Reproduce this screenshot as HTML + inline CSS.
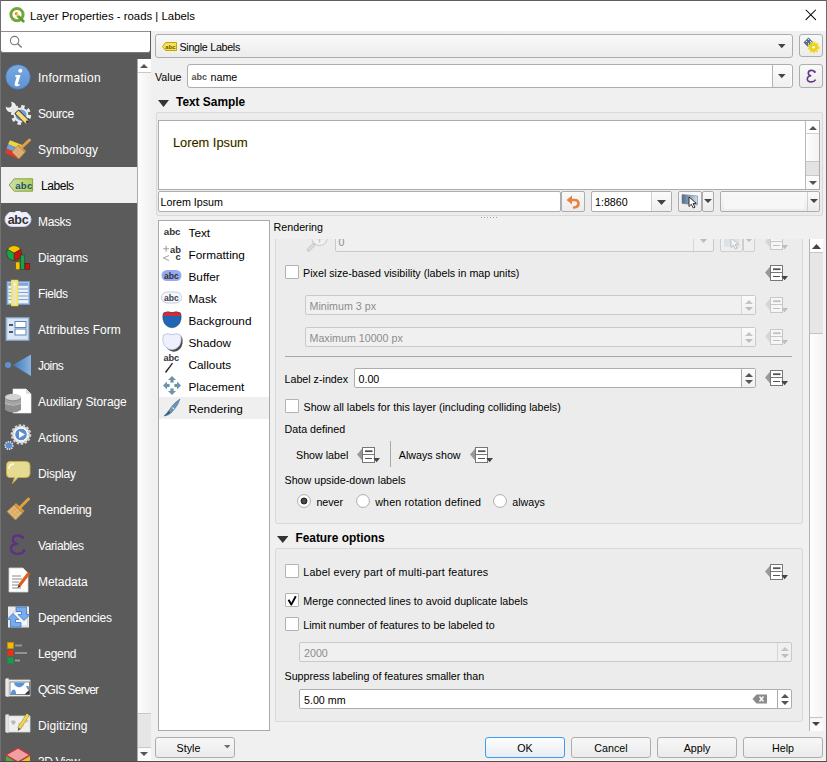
<!DOCTYPE html>
<html><head><meta charset="utf-8">
<style>
*{box-sizing:border-box;margin:0;padding:0}
html,body{width:827px;height:762px;overflow:hidden;background:#f0f0f0;font-family:"Liberation Sans",sans-serif;color:#000;position:relative}
.a{position:absolute}
.t{position:absolute;white-space:nowrap}
</style></head><body>
<div class="a" style="left:0px;top:0px;width:827px;height:762px;background:#f0f0f0"></div>
<div class="a" style="left:0px;top:1px;width:827px;height:30px;background:#fff"></div>
<div class="a" style="left:0px;top:0px;width:827px;height:1px;background:#5e5e5e"></div>
<div class="a" style="left:0px;top:0px;width:1px;height:762px;background:#707070"></div>
<div class="a" style="left:826px;top:0px;width:1px;height:762px;background:#6e6e6e"></div>
<svg class="a" style="left:8px;top:6px" width="19" height="19" viewBox="0 0 19 19"><circle cx="9" cy="8.6" r="6.1" fill="none" stroke="#73a93a" stroke-width="3"/><line x1="10" y1="10" x2="15.3" y2="15.3" stroke="#5e9e2e" stroke-width="2.8" stroke-linecap="round"/><circle cx="8.3" cy="7.7" r="1.6" fill="#f1891f"/><line x1="8.6" y1="8" x2="10.5" y2="10" stroke="#e7d36a" stroke-width="1.6"/></svg>
<div class="t" style="left:30px;top:9.00px;font-size:11.4px;line-height:14px;font-weight:400;color:#000;">Layer Properties - roads | Labels</div>
<svg class="a" style="left:805px;top:9px" width="12" height="12" viewBox="0 0 12 12"><path d="M1 1L10.6 10.6M10.6 1L1 10.6" stroke="#000" stroke-width="1.05" stroke-linecap="round"/></svg>
<div class="a" style="left:1px;top:31px;width:150px;height:28px;background:#5b5b5b"></div>
<div class="a" style="left:1px;top:31px;width:149px;height:1px;background:#8e8e8e"></div>
<div class="a" style="left:1px;top:32px;width:149px;height:20px;background:#fff;border-radius:0 0 2px 2px"></div>
<div class="a" style="left:1px;top:52px;width:149px;height:1px;background:#7a7a7a"></div>
<svg class="a" style="left:9px;top:35px" width="14" height="14" viewBox="0 0 14 14"><circle cx="5.6" cy="5.6" r="4.2" fill="none" stroke="#777" stroke-width="1.1"/><line x1="8.6" y1="8.6" x2="12.6" y2="12.6" stroke="#777" stroke-width="1.4"/></svg>
<div class="a" style="left:1px;top:53px;width:149px;height:709px;background:#5b5b5b"></div>
<div class="a" style="left:137px;top:59px;width:14px;height:703px;background:linear-gradient(90deg,#fdfdfd,#f1f1f1);border-left:1px solid #ababab"></div>
<div class="a" style="left:138px;top:59px;width:13px;height:14px;background:#fff;border-bottom:1px solid #c8c8c8"></div>
<svg class="a" style="left:140px;top:63.5px" width="8" height="4" viewBox="0 0 8 4"><polygon points="0,4 8,4 4.0,0" fill="#555"/></svg>
<div class="a" style="left:138px;top:713px;width:13px;height:35px;background:#e6e6e6;border-top:1px solid #c8c8c8;border-bottom:1px solid #c8c8c8"></div>
<div class="a" style="left:138px;top:748px;width:13px;height:13px;background:#fbfbfb"></div>
<svg class="a" style="left:140px;top:752px" width="8" height="4" viewBox="0 0 8 4"><polygon points="0,0 8,0 4.0,4" fill="#555"/></svg>
<div class="a" style="left:1px;top:167px;width:136px;height:36px;background:#f0f0f0"></div>
<div class="t" style="left:38px;top:70.50px;font-size:12px;line-height:15px;font-weight:400;color:#fff;letter-spacing:0.257px">Information</div>
<div class="t" style="left:38px;top:106.50px;font-size:12px;line-height:15px;font-weight:400;color:#fff;letter-spacing:-0.386px">Source</div>
<div class="t" style="left:38px;top:142.50px;font-size:12px;line-height:15px;font-weight:400;color:#fff;letter-spacing:0.078px">Symbology</div>
<div class="t" style="left:41px;top:178.50px;font-size:12px;line-height:15px;font-weight:400;color:#000;letter-spacing:-0.455px">Labels</div>
<div class="t" style="left:38px;top:214.50px;font-size:12px;line-height:15px;font-weight:400;color:#fff;letter-spacing:-0.368px">Masks</div>
<div class="t" style="left:38px;top:250.50px;font-size:12px;line-height:15px;font-weight:400;color:#fff;letter-spacing:-0.18px">Diagrams</div>
<div class="t" style="left:38px;top:286.50px;font-size:12px;line-height:15px;font-weight:400;color:#fff;letter-spacing:-0.423px">Fields</div>
<div class="t" style="left:38px;top:322.50px;font-size:12px;line-height:15px;font-weight:400;color:#fff;letter-spacing:0.055px">Attributes Form</div>
<div class="t" style="left:38px;top:358.50px;font-size:12px;line-height:15px;font-weight:400;color:#fff;letter-spacing:-0.554px">Joins</div>
<div class="t" style="left:38px;top:394.50px;font-size:12px;line-height:15px;font-weight:400;color:#fff;letter-spacing:-0.126px">Auxiliary Storage</div>
<div class="t" style="left:38px;top:430.50px;font-size:12px;line-height:15px;font-weight:400;color:#fff;letter-spacing:0.073px">Actions</div>
<div class="t" style="left:38px;top:466.50px;font-size:12px;line-height:15px;font-weight:400;color:#fff;letter-spacing:-0.227px">Display</div>
<div class="t" style="left:38px;top:502.50px;font-size:12px;line-height:15px;font-weight:400;color:#fff;letter-spacing:-0.197px">Rendering</div>
<div class="t" style="left:38px;top:538.50px;font-size:12px;line-height:15px;font-weight:400;color:#fff;letter-spacing:-0.393px">Variables</div>
<div class="t" style="left:38px;top:574.50px;font-size:12px;line-height:15px;font-weight:400;color:#fff;letter-spacing:-0.05px">Metadata</div>
<div class="t" style="left:38px;top:610.50px;font-size:12px;line-height:15px;font-weight:400;color:#fff;letter-spacing:-0.258px">Dependencies</div>
<div class="t" style="left:38px;top:646.50px;font-size:12px;line-height:15px;font-weight:400;color:#fff;letter-spacing:-0.329px">Legend</div>
<div class="t" style="left:38px;top:682.50px;font-size:12px;line-height:15px;font-weight:400;color:#fff;letter-spacing:-0.759px">QGIS Server</div>
<div class="t" style="left:38px;top:718.50px;font-size:12px;line-height:15px;font-weight:400;color:#fff;letter-spacing:0.079px">Digitizing</div>
<div class="t" style="left:38px;top:754.50px;font-size:12px;line-height:15px;font-weight:400;color:#fff;letter-spacing:-0.411px">3D View</div>
<svg class="a" style="left:5px;top:64px" width="26" height="26" viewBox="0 0 26 26"><defs><linearGradient id="gi" x1="0" y1="0" x2="0" y2="1"><stop offset="0" stop-color="#79a9e2"/><stop offset="1" stop-color="#5e92d2"/></linearGradient></defs><circle cx="13" cy="13" r="12.3" fill="url(#gi)" stroke="#3f6fae" stroke-width="0.6"/><circle cx="15.3" cy="6.8" r="2" fill="#fff"/><path d="M10.5 11H15.5L13 19.5Q12.6 21 14.5 20L15 21Q12.5 23 10.3 22Q9 21.4 9.7 19.6L11.6 13H10.2Z" fill="#fff"/></svg>
<svg class="a" style="left:2px;top:96px" width="32" height="32" viewBox="0 0 32 32"><circle cx="19" cy="19" r="8.6" fill="none" stroke="#ececec" stroke-width="3" stroke-dasharray="3.4 3.35"/><circle cx="19" cy="19" r="7.4" fill="#ececec"/><circle cx="19" cy="19" r="5.6" fill="#6e9fd8"/><circle cx="9" cy="11" r="5.2" fill="#eeeeee"/><circle cx="6.6" cy="8.4" r="3.1" fill="#5b5b5b"/><line x1="10" y1="12" x2="15" y2="17" stroke="#e6e6e6" stroke-width="4"/><line x1="14.5" y1="15.5" x2="25.5" y2="26.5" stroke="#262626" stroke-width="6"/><line x1="15" y1="16" x2="25.3" y2="26.3" stroke="#f3dc78" stroke-width="4.3"/><circle cx="25.2" cy="25.8" r="1.3" fill="#333"/></svg>
<svg class="a" style="left:2px;top:132px" width="32" height="32" viewBox="0 0 32 32"><polygon points="8,8.3 21.5,13.5 19.5,17.5 6,12.3" fill="#ecd63a"/><polygon points="6,12.3 19.5,17.5 13,20 4.5,16.8" fill="#6e9fd6"/><polygon points="4.5,16.8 13,20 16.5,27 3,21" fill="#e23a2a"/><polygon points="10,20 15.5,13.8 23,20.3 16.8,27" fill="#ddb27a" stroke="#b88236" stroke-width="0.7"/><polygon points="15.5,13.8 17,12.3 24,19 23,20.3" fill="#d4963e"/><g stroke="#caa06a" stroke-width="0.45"><line x1="12" y1="17.7" x2="19" y2="24.5"/><line x1="13.8" y1="15.8" x2="21" y2="22.5"/><line x1="12.3" y1="22.8" x2="18.5" y2="16"/><line x1="14.5" y1="25" x2="20.7" y2="18.2"/></g><line x1="19.5" y1="15.5" x2="27.5" y2="8" stroke="#dfa046" stroke-width="3" stroke-linecap="round"/></svg>
<svg class="a" style="left:8px;top:177px" width="26" height="16" viewBox="0 0 26 16"><defs><linearGradient id="gl" x1="0" x2="1"><stop offset="0" stop-color="#c8e2a8"/><stop offset="1" stop-color="#b2cf5a"/></linearGradient></defs><path d="M1.2 8L6.2 1.8H24.6V14.2H6.2Z" fill="url(#gl)" stroke="#8ca23c" stroke-width="1"/><text x="16" y="11.6" font-size="9.6" font-weight="bold" font-family="Liberation Sans" fill="#234f70" text-anchor="middle" letter-spacing="0.4">abc</text></svg>
<svg class="a" style="left:4px;top:211px" width="28" height="17" viewBox="0 0 28 17"><rect x="1" y="1.5" width="26" height="14" rx="7" fill="#eef0fb" stroke="#c9cde4" stroke-width="1"/><circle cx="7" cy="4.5" r="3.5" fill="#eef0fb"/><circle cx="14" cy="3" r="3.5" fill="#eef0fb"/><circle cx="21" cy="4.5" r="3.5" fill="#eef0fb"/><text x="14" y="13" font-size="12.5" font-weight="bold" font-family="Liberation Sans" fill="#333" text-anchor="middle" letter-spacing="-0.3">abc</text></svg>
<svg class="a" style="left:5px;top:244px" width="26" height="28" viewBox="0 0 26 28"><path d="M9.1 9.1L2.6 5.35A7.5 7.5 0 0 1 15.6 5.35Z" fill="#f6c700"/><path d="M9.1 9.1L15.6 5.35A7.5 7.5 0 0 1 9.1 16.6Z" fill="#c8150f"/><path d="M9.1 9.1L9.1 16.6A7.5 7.5 0 0 1 2.6 5.35Z" fill="#17a34a"/><circle cx="9.1" cy="9.1" r="7.5" fill="none" stroke="#3a2a1a" stroke-width="0.6"/><path d="M2.6 5.35L9.1 9.1L15.6 5.35M9.1 9.1V16.6" stroke="#3a2a1a" stroke-width="0.6" fill="none"/><rect x="10.8" y="18" width="4.1" height="7.6" fill="#f6c700" stroke="#6a4a00" stroke-width="0.5"/><rect x="15.6" y="11" width="4.1" height="14.6" fill="#17a34a" stroke="#1a3a1a" stroke-width="0.5"/><rect x="20.1" y="19.4" width="4.4" height="6.2" fill="#c8150f" stroke="#4a0a0a" stroke-width="0.5"/></svg>
<svg class="a" style="left:5px;top:279px" width="26" height="28" viewBox="0 0 26 28"><rect x="2" y="2.5" width="22.5" height="23" fill="#a9c4e4" stroke="#6f98c6" stroke-width="1"/><rect x="3.5" y="7" width="19.5" height="17" fill="#eef2f8"/><rect x="3.5" y="4" width="19.5" height="2.5" fill="#7ea6d6"/><g stroke="#7ea6d6" stroke-width="1.1"><line x1="3.5" y1="10" x2="23" y2="10"/><line x1="3.5" y1="13.5" x2="23" y2="13.5"/><line x1="3.5" y1="17" x2="23" y2="17"/><line x1="3.5" y1="20.5" x2="23" y2="20.5"/></g><rect x="6.8" y="1.5" width="5.8" height="25" fill="#ece4bc" stroke="#f5e542" stroke-width="1.4"/><circle cx="9.7" cy="5.5" r="0.9" fill="#fff"/></svg>
<svg class="a" style="left:5px;top:316px" width="26" height="26" viewBox="0 0 26 26"><rect x="1" y="1.5" width="23" height="23" fill="#b9cde4" stroke="#7c9fc9" stroke-width="1"/><rect x="2.5" y="3" width="20" height="20" fill="#dbe6f2"/><rect x="4" y="8" width="4" height="2" fill="#3d5a78"/><rect x="4" y="15" width="4" height="2" fill="#3d5a78"/><rect x="10" y="5.5" width="11" height="6" fill="#fff" stroke="#5f85b3"/><rect x="10" y="13" width="11" height="6" fill="#fff" stroke="#5f85b3"/></svg>
<svg class="a" style="left:4px;top:353px" width="28" height="24" viewBox="0 0 28 24"><defs><linearGradient id="gj" x1="0" x2="1"><stop offset="0" stop-color="#3b78b9"/><stop offset="1" stop-color="#8ab3e0"/></linearGradient></defs><circle cx="4" cy="12" r="3" fill="#5d92cf"/><polygon points="8.8,12 27,1.5 27,23" fill="url(#gj)"/></svg>
<svg class="a" style="left:4px;top:388px" width="28" height="26" viewBox="0 0 28 26"><path d="M9 1H22L27 6V25H9Z" fill="#fff" stroke="#eee" stroke-width="0.6"/><path d="M22 1V6H27" fill="#ddd"/><path d="M1 9V22Q9 27 17 22V9Z" fill="#8e8e8e"/><ellipse cx="9" cy="9" rx="8" ry="3.2" fill="#d2d2d2"/><path d="M1 15Q9 19 17 15" fill="none" stroke="#d6d6d6" stroke-width="1.2"/><path d="M1 11Q9 16 17 11V15Q9 19 1 15Z" fill="#a4a4a4"/></svg>
<svg class="a" style="left:4px;top:422px" width="28" height="28" viewBox="0 0 28 28"><circle cx="17" cy="12.5" r="8.8" fill="#f0f0f0" stroke="#d0d0d0" stroke-width="3" stroke-dasharray="2.3 1.6"/><circle cx="17" cy="12.5" r="6.3" fill="#5b8dcb" stroke="#fff" stroke-width="1"/><polygon points="15,9 21,12.5 15,16" fill="#fff"/><circle cx="5" cy="23.5" r="3.8" fill="#5b8dcb" stroke="#e6e6e6" stroke-width="1.6" stroke-dasharray="1.3 1"/></svg>
<svg class="a" style="left:5px;top:460px" width="26" height="25" viewBox="0 0 26 25"><path d="M4.5 1.5H21Q25 1.5 25 5.5V13.5Q25 17.5 21 17.5H13L7.5 23.5L9.5 17.5H4.5Q1.5 17.5 1.5 13.5V5.5Q1.5 1.5 4.5 1.5Z" fill="#e6db92" stroke="#c4ad4a" stroke-width="1"/><path d="M4 9Q4 4 9 4" stroke="#fffbe8" stroke-width="1.4" fill="none"/></svg>
<svg class="a" style="left:5px;top:496px" width="26" height="26" viewBox="0 0 26 26"><polygon points="2,15.5 9,9 17.5,17 10.5,24" fill="#e2b878" stroke="#b88236" stroke-width="0.8"/><polygon points="9,9 11,7 19.5,15 17.5,17" fill="#d4963e"/><g stroke="#c9974d" stroke-width="0.5"><line x1="4.5" y1="13" x2="13" y2="21.3"/><line x1="7" y1="10.8" x2="15.3" y2="19"/><line x1="5" y1="18" x2="12" y2="11.5"/><line x1="8" y1="21" x2="14.5" y2="14.5"/></g><line x1="14.5" y1="12" x2="23.5" y2="3" stroke="#e0a23c" stroke-width="3" stroke-linecap="round"/></svg>
<svg class="a" style="left:8px;top:533px" width="20" height="24" viewBox="0 0 20 24"><path d="M14.5 4.5Q13 2.5 9.5 2.5Q4.8 2.5 4.8 6.5Q4.8 10 9 10.8Q3 11.3 3 15.5Q3 20.8 9.8 20.8Q14.5 20.8 16 17.5" fill="none" stroke="#5f2f88" stroke-width="2.3" stroke-linecap="round"/><circle cx="14.6" cy="4.2" r="1.5" fill="#5f2f88"/><circle cx="16" cy="17.3" r="1.3" fill="#5f2f88"/><path d="M8 10.8H10.5" stroke="#5f2f88" stroke-width="1.2"/></svg>
<svg class="a" style="left:5px;top:566px" width="26" height="28" viewBox="0 0 26 28"><path d="M4 2H18L23 7V26H4Z" fill="#fff" stroke="#d0d0d0" stroke-width="0.8"/><g stroke="#8a8a8a" stroke-width="1"><line x1="7" y1="10" x2="16" y2="10"/><line x1="7" y1="13" x2="17" y2="13"/><line x1="7" y1="16" x2="14" y2="16"/><line x1="7" y1="19" x2="13" y2="19"/><line x1="7" y1="22" x2="16" y2="22"/></g><line x1="14" y1="20" x2="24" y2="7" stroke="#e0601a" stroke-width="3.2"/><polygon points="12.5,22 13.5,19 15.5,20.5" fill="#333"/></svg>
<svg class="a" style="left:4px;top:604px" width="28" height="26" viewBox="0 0 28 26"><rect x="4" y="2.5" width="21" height="21" fill="#ebebeb"/><rect x="9.5" y="8" width="14" height="14" fill="#f6f6f6" stroke="#cfcfcf" stroke-width="0.8"/><path d="M12 3H22.5V10.5H26L20 16.5L14 10.5H17.5V7.5H12Z" fill="#78acec" stroke="#3f77c2" stroke-width="0.8" stroke-linejoin="round"/><path d="M17 23H6.5V15.5H3L9 9.5L15 15.5H11.5V18.5H17Z" fill="#78acec" stroke="#3f77c2" stroke-width="0.8" stroke-linejoin="round"/></svg>
<svg class="a" style="left:5px;top:640px" width="26" height="26" viewBox="0 0 26 26"><rect x="2.5" y="2.5" width="6" height="6" fill="#f6b800" stroke="#d28f00" stroke-width="0.5"/><rect x="2.5" y="10" width="6" height="6" fill="#e4331b"/><rect x="2.5" y="17.5" width="6" height="6" fill="#129e45"/><g stroke="#9a9a9a" stroke-width="1.8"><line x1="10" y1="5.5" x2="17" y2="5.5"/><line x1="10" y1="13" x2="22" y2="13"/><line x1="10" y1="20.5" x2="15" y2="20.5"/></g></svg>
<svg class="a" style="left:4px;top:677px" width="28" height="22" viewBox="0 0 28 22"><path d="M3 3H26V19H3Z" fill="#f2f2f2" stroke="#d8d8d8" stroke-width="0.8"/><path d="M1.5 2.5Q1.5 1.5 3 1.5H4.5V19.5H3Q1.5 19.5 1.5 18.5Z" fill="#e8e8e8" stroke="#cfcfcf" stroke-width="0.6"/><rect x="6" y="5" width="19.5" height="12.5" fill="#fff" stroke="#6a6a6a" stroke-width="0.8"/><path d="M10 5.5H21Q20 9 17 10Q14 11 12 9Q10 8 10 5.5Z" fill="#5b95d6"/><path d="M6.5 17Q7.5 12.5 10 12.5Q12 13 12 17Z" fill="#5b95d6"/><path d="M22 9Q25 8 25 11V13Q23 12 22 9Z" fill="#5b95d6"/><polygon points="20.5,17.5 25.5,12.5 25.5,17.5" fill="#3a3a3a"/></svg>
<svg class="a" style="left:4px;top:712px" width="28" height="22" viewBox="0 0 28 22"><path d="M3 4H26V20H3Z" fill="#efefef" stroke="#d6d6d6" stroke-width="0.8"/><path d="M1.5 3.5Q1.5 2.5 3 2.5H4.5V20.5H3Q1.5 20.5 1.5 19.5Z" fill="#e4e4e4" stroke="#cfcfcf" stroke-width="0.6"/><path d="M7 9Q10 7 12 10Q10 14 8 12Z" fill="#b9b9b9"/><path d="M14 12Q17 9 20 13L17 17Z" fill="#c4c4c4"/><path d="M20 8Q23 7 25 9L22 11Z" fill="#c9c9c9"/><line x1="15" y1="16.5" x2="24" y2="2.5" stroke="#b59a1a" stroke-width="3.6"/><line x1="15" y1="16.5" x2="24" y2="2.5" stroke="#efd653" stroke-width="2.4"/><polygon points="13.8,19 14.3,15.6 16.6,17" fill="#555"/></svg>
<svg class="a" style="left:4px;top:747px" width="28" height="15" viewBox="0 0 28 15"><polygon points="14,1 26,8 14,15 2,8" fill="#f0a0a0" stroke="#c8303a" stroke-width="1.2"/><polygon points="2,9 14,16 2,16" fill="#4caf3a"/><polygon points="26,9 14,16 26,16" fill="#e8c42a"/></svg>
<div class="a" style="left:155px;top:34px;width:638px;height:24px;border:1px solid #adadad;border-radius:3px;background:linear-gradient(#f9f9f9,#ececec)"></div>
<svg class="a" style="left:162px;top:42px" width="15" height="9" viewBox="0 0 15 9"><path d="M0.5 4.5L3.5 0.5H14.5V8.5H3.5Z" fill="#f5e15a" stroke="#c9a400"/><text x="8.5" y="7" font-size="6" font-family="Liberation Sans" font-weight="bold" fill="#6b5a00" text-anchor="middle">abc</text></svg>
<div class="t" style="left:179.5px;top:40.50px;font-size:10.7px;line-height:13px;font-weight:400;color:#000;letter-spacing:-0.28px">Single Labels</div>
<svg class="a" style="left:778px;top:44px" width="7.6" height="4.2" viewBox="0 0 7.6 4.2"><polygon points="0,0 7.6,0 3.8,4.2" fill="#444"/></svg>
<div class="a" style="left:799px;top:34px;width:24px;height:23px;border:1px solid #adadad;border-radius:3px;background:linear-gradient(#f9f9f9,#ececec)"></div>
<svg class="a" style="left:802px;top:36px" width="20" height="20" viewBox="0 0 20 20"><polygon points="1.5,6.5 6.5,1.5 11,6 6,11" fill="#4f6f8f"/><g fill="#fff"><circle cx="4.5" cy="5.5" r="0.6"/><circle cx="6.5" cy="3.5" r="0.6"/><circle cx="6.5" cy="7.5" r="0.6"/><circle cx="8.5" cy="5.5" r="0.6"/></g><circle cx="11.6" cy="11.3" r="4.6" fill="#f2dc2a" stroke="#f2dc2a" stroke-width="2.6" stroke-dasharray="1.7 1.3"/><circle cx="11.6" cy="11.3" r="4.2" fill="#efd21f"/><circle cx="11.6" cy="11.3" r="1.2" fill="#fff"/></svg>
<div class="t" style="left:155px;top:70.50px;font-size:10.7px;line-height:13px;font-weight:400;color:#000;">Value</div>
<div class="a" style="left:187px;top:64px;width:606px;height:24px;border:1px solid #adadad;border-radius:3px;background:#fff"></div>
<div class="a" style="left:773px;top:65px;width:18px;height:22px;background:linear-gradient(#fdfdfd,#efefef);border-radius:0 2px 2px 0"></div>
<div class="a" style="left:772px;top:65px;width:1px;height:22px;background:#b4b4b4"></div>
<svg class="a" style="left:778px;top:74px" width="7.6" height="4.2" viewBox="0 0 7.6 4.2"><polygon points="0,0 7.6,0 3.8,4.2" fill="#444"/></svg>
<div class="t" style="left:191.5px;top:71.50px;font-size:9px;line-height:11px;font-weight:700;color:#555;">abc</div>
<div class="t" style="left:210.5px;top:70.50px;font-size:10.7px;line-height:13px;font-weight:400;color:#000;">name</div>
<div class="a" style="left:799px;top:64px;width:24px;height:24px;border:1px solid #adadad;border-radius:3px;background:linear-gradient(#f9f9f9,#ececec)"></div>
<svg class="a" style="left:804px;top:68px" width="14" height="16" viewBox="0 0 14 16"><path d="M11 4Q10 2.4 7.3 2.4Q4.3 2.4 4.3 5.2Q4.3 7.4 7.2 7.8Q3.3 8.2 3.3 11Q3.3 13.9 7.3 13.9Q10.3 13.9 11.6 11.6" fill="none" stroke="#5e3a8a" stroke-width="1.6"/><circle cx="10.8" cy="4" r="1.1" fill="#5e3a8a"/></svg>
<svg class="a" style="left:157.5px;top:100px" width="11" height="7" viewBox="0 0 11 7"><polygon points="0,0 11,0 5.5,7" fill="#333"/></svg>
<div class="t" style="left:176px;top:94.50px;font-size:11.9px;line-height:15px;font-weight:700;color:#000;">Text Sample</div>
<div class="a" style="left:156px;top:112px;width:667px;height:104px;border:1px solid #d9d9d9;border-radius:2px;background:#ececec"></div>
<div class="a" style="left:158px;top:120px;width:662px;height:70px;background:#fff;border:1px solid #ababab"></div>
<div class="t" style="left:173px;top:134.50px;font-size:12.8px;line-height:16px;font-weight:400;color:#1a1a1a;text-shadow:0 0 1px #fff3b8,0 0 2px #fff3b8,0 0 2px #fff6cc">Lorem Ipsum</div>
<div class="a" style="left:805px;top:121px;width:14px;height:68px;background:linear-gradient(90deg,#fdfdfd,#f3f3f3);border-left:1px solid #b9b9b9"></div>
<div class="a" style="left:806px;top:121px;width:13px;height:13px;background:#fff;border-bottom:1px solid #cfcfcf"></div>
<svg class="a" style="left:808.5px;top:125.5px" width="8" height="4" viewBox="0 0 8 4"><polygon points="0,4 8,4 4.0,0" fill="#555"/></svg>
<div class="a" style="left:806px;top:161px;width:13px;height:15px;background:#e3e3e3;border-top:1px solid #c8c8c8;border-bottom:1px solid #c8c8c8"></div>
<div class="a" style="left:806px;top:176px;width:13px;height:13px;background:#fbfbfb"></div>
<svg class="a" style="left:808.5px;top:180.5px" width="8" height="4" viewBox="0 0 8 4"><polygon points="0,0 8,0 4.0,4" fill="#555"/></svg>
<div class="a" style="left:158px;top:191px;width:403px;height:21px;border:1px solid #adadad;border-radius:2px;background:#fff"></div>
<div class="t" style="left:160.5px;top:195.50px;font-size:10.7px;line-height:13px;font-weight:400;color:#000;">Lorem Ipsum</div>
<div class="a" style="left:561px;top:191px;width:24px;height:21px;border:1px solid #adadad;border-radius:2px;background:linear-gradient(#f9f9f9,#ececec)"></div>
<svg class="a" style="left:564px;top:193px" width="18" height="17" viewBox="0 0 18 17"><path d="M7 7H10.5Q14.5 7 14.5 10.5Q14.5 14 10 14.5" fill="none" stroke="#e8823e" stroke-width="2.6" stroke-linecap="round"/><polygon points="2.5,7 8,2.5 8,11.5" fill="#e8823e"/></svg>
<div class="a" style="left:591px;top:191px;width:81px;height:21px;border:1px solid #adadad;border-radius:2px;background:#fff"></div>
<div class="a" style="left:651px;top:192px;width:1px;height:19px;background:#d0d0d0"></div>
<div class="a" style="left:652px;top:192px;width:19px;height:19px;background:linear-gradient(#fbfbfb,#efefef)"></div>
<div class="t" style="left:595px;top:195.50px;font-size:10.7px;line-height:13px;font-weight:400;color:#000;">1:8860</div>
<svg class="a" style="left:657px;top:199.5px" width="9" height="5" viewBox="0 0 9 5"><polygon points="0,0 9,0 4.5,5" fill="#444"/></svg>
<div class="a" style="left:678px;top:191px;width:24px;height:21px;border:1px solid #adadad;border-radius:2px;background:linear-gradient(#f9f9f9,#ececec)"></div>
<svg class="a" style="left:681px;top:193px" width="19" height="16" viewBox="0 0 19 16"><defs><linearGradient id="gc" x1="0" x2="1"><stop offset="0" stop-color="#4f6d8c"/><stop offset="1" stop-color="#d7e0ea"/></linearGradient></defs><polygon points="1,1.5 16.5,3 16.5,12 1,10.5" fill="url(#gc)" stroke="#6b8099" stroke-width="0.6"/><path d="M8 4L8 13.5L10.3 11.3L12.3 15L14 14.2L12.1 10.6L15.3 10.3Z" fill="#fff" stroke="#1a1a1a" stroke-width="0.9" stroke-linejoin="round"/></svg>
<div class="a" style="left:702px;top:191px;width:12px;height:21px;border:1px solid #adadad;border-radius:2px;background:linear-gradient(#f9f9f9,#ececec)"></div>
<svg class="a" style="left:704px;top:199px" width="8" height="4" viewBox="0 0 8 4"><polygon points="0,0 8,0 4.0,4" fill="#444"/></svg>
<div class="a" style="left:720px;top:191px;width:100px;height:21px;border:1px solid #adadad;border-radius:2px;background:linear-gradient(#f9f9f9,#ececec)"></div>
<div class="a" style="left:724px;top:194px;width:80px;height:15px;background:#f7f7f7;border-radius:2px"></div>
<div class="a" style="left:807px;top:192px;width:1px;height:19px;background:#d0d0d0"></div>
<svg class="a" style="left:809.5px;top:199px" width="8" height="4" viewBox="0 0 8 4"><polygon points="0,0 8,0 4.0,4" fill="#444"/></svg>
<div class="a" style="left:481px;top:217px;width:1px;height:1px;background:#a0a0a0"></div>
<div class="a" style="left:484px;top:217px;width:1px;height:1px;background:#a0a0a0"></div>
<div class="a" style="left:487px;top:217px;width:1px;height:1px;background:#a0a0a0"></div>
<div class="a" style="left:490px;top:217px;width:1px;height:1px;background:#a0a0a0"></div>
<div class="a" style="left:493px;top:217px;width:1px;height:1px;background:#a0a0a0"></div>
<div class="a" style="left:496px;top:217px;width:1px;height:1px;background:#a0a0a0"></div>
<div class="a" style="left:158px;top:220px;width:112px;height:511px;background:#fff;border:1px solid #a9a9a9"></div>
<div class="a" style="left:159px;top:397px;width:110px;height:22px;background:#efefef"></div>
<div class="t" style="left:188.5px;top:225.50px;font-size:11.8px;line-height:15px;font-weight:400;color:#000;">Text</div>
<div class="t" style="left:188.5px;top:247.50px;font-size:11.8px;line-height:15px;font-weight:400;color:#000;">Formatting</div>
<div class="t" style="left:188.5px;top:269.50px;font-size:11.8px;line-height:15px;font-weight:400;color:#000;">Buffer</div>
<div class="t" style="left:188.5px;top:291.50px;font-size:11.8px;line-height:15px;font-weight:400;color:#000;">Mask</div>
<div class="t" style="left:188.5px;top:313.50px;font-size:11.8px;line-height:15px;font-weight:400;color:#000;">Background</div>
<div class="t" style="left:188.5px;top:335.50px;font-size:11.8px;line-height:15px;font-weight:400;color:#000;">Shadow</div>
<div class="t" style="left:188.5px;top:357.50px;font-size:11.8px;line-height:15px;font-weight:400;color:#000;">Callouts</div>
<div class="t" style="left:188.5px;top:379.50px;font-size:11.8px;line-height:15px;font-weight:400;color:#000;">Placement</div>
<div class="t" style="left:188.5px;top:401.50px;font-size:11.8px;line-height:15px;font-weight:400;color:#000;">Rendering</div>
<div class="t" style="left:163.8px;top:225.50px;font-size:9.8px;line-height:12px;font-weight:700;color:#333;letter-spacing:-0.1px">abc</div>
<svg class="a" style="left:162px;top:244px" width="20" height="18" viewBox="0 0 20 18"><path d="M1.2 4.8H7M4.1 1.8V7.8" stroke="#a0a0a0" stroke-width="1.1"/><text x="8" y="8.6" font-size="9.4" font-weight="bold" font-family="Liberation Sans" fill="#333">ab</text><path d="M7 11.5L1.5 14L7 16.5" fill="none" stroke="#a0a0a0" stroke-width="1"/><text x="13.6" y="16.4" font-size="9.4" font-weight="bold" font-family="Liberation Sans" fill="#333">c</text></svg>
<svg class="a" style="left:161px;top:269px" width="22" height="13" viewBox="0 0 22 13"><rect x="0.5" y="1" width="20" height="11" rx="5.5" fill="#96aaf0"/><text x="10.5" y="9.5" font-size="8.6" font-weight="bold" font-family="Liberation Sans" fill="#333" text-anchor="middle">abc</text></svg>
<svg class="a" style="left:161px;top:291px" width="22" height="13" viewBox="0 0 22 13"><rect x="0.5" y="1" width="20" height="11" rx="5.5" fill="#f4f6ff" stroke="#b8bed6" stroke-width="0.8"/><text x="10.5" y="9.5" font-size="8.6" font-weight="bold" font-family="Liberation Sans" fill="#444" text-anchor="middle">abc</text></svg>
<svg class="a" style="left:162px;top:310px" width="20" height="19" viewBox="0 0 20 19"><defs><clipPath id="cs"><path d="M1.5 3Q5.5 0.8 10 2.6Q14.5 0.8 18.5 3Q19.6 6 19 9.5Q17.5 17 10 17.8Q2.5 17 1 9.5Q0.4 6 1.5 3Z"/></clipPath></defs><g clip-path="url(#cs)"><rect x="0" y="0" width="20" height="19" fill="#1f66b3"/><rect x="0" y="0" width="20" height="6" fill="#d92a2f"/></g><path d="M1.5 3Q5.5 0.8 10 2.6Q14.5 0.8 18.5 3Q19.6 6 19 9.5Q17.5 17 10 17.8Q2.5 17 1 9.5Q0.4 6 1.5 3Z" fill="none" stroke="#17467a" stroke-width="0.5"/></svg>
<svg class="a" style="left:162px;top:332px" width="21" height="20" viewBox="0 0 21 20"><path d="M3.5 5Q7.5 2.8 12 4.6Q16.5 2.8 20 5Q21 8 20.5 11.5Q19 19 12 19.8Q4.5 19 3 11.5Q2.4 8 3.5 5Z" fill="#4a4a4a"/><path d="M1.5 3Q5.5 0.8 10 2.6Q14.5 0.8 18.5 3Q19.6 6 19 9.5Q17.5 17 10 17.8Q2.5 17 1 9.5Q0.4 6 1.5 3Z" fill="#eef1fd" stroke="#aab3d8" stroke-width="0.7"/></svg>
<svg class="a" style="left:162px;top:354px" width="20" height="20" viewBox="0 0 20 20"><text x="1.6" y="7.2" font-size="9.2" font-weight="bold" font-family="Liberation Sans" fill="#333" letter-spacing="-0.2">abc</text><line x1="3.5" y1="18.5" x2="10.5" y2="9.2" stroke="#2a2a2a" stroke-width="1.4"/></svg>
<svg class="a" style="left:162px;top:375px" width="20" height="22" viewBox="0 0 20 22"><g fill="#6f93ad"><polygon points="10,1 14,5 6,5"/><rect x="8.4" y="5" width="3.2" height="2.6"/><polygon points="10,20 14,16 6,16"/><rect x="8.4" y="13.4" width="3.2" height="2.6"/><polygon points="1,10.5 5,6.5 5,14.5"/><rect x="5" y="8.9" width="2.6" height="3.2"/><polygon points="19,10.5 15,6.5 15,14.5"/><rect x="12.4" y="8.9" width="2.6" height="3.2"/></g></svg>
<svg class="a" style="left:162px;top:398px" width="20" height="20" viewBox="0 0 20 20"><path d="M18 1Q16.5 6 13 10.5L10 14Q7 17.5 2 18Q5.5 14.5 7.5 11.5L11 7Q14 3.5 18 1Z" fill="#6f93b3" stroke="#4d7091" stroke-width="0.6"/><path d="M2 18Q6 17 8.5 14.5L7 13Q5 16 2 18Z" fill="#2e5878"/><path d="M10.5 9.5L12 11" stroke="#e3ebf2" stroke-width="1.1"/></svg>
<div class="t" style="left:273.6px;top:220.50px;font-size:10.7px;line-height:13px;font-weight:400;color:#000;">Rendering</div>
<div class="a" style="left:274px;top:239px;width:549px;height:491px;overflow:hidden">
<div class="a" style="left:1px;top:-39px;width:528px;height:324px;border:1px solid #d9d9d9;border-radius:2px;background:#ececec"></div>
<svg class="a" style="left:30px;top:-11px" width="26" height="26" viewBox="0 0 26 26"><circle cx="15.5" cy="10" r="7.6" fill="#f2f2f2" stroke="#cfcfcf" stroke-width="1.1"/><line x1="15.5" y1="8" x2="15.5" y2="14.5" stroke="#c9c9c9" stroke-width="1.6"/><line x1="11" y1="10.6" x2="20" y2="10.6" stroke="#c9c9c9" stroke-width="1.3"/><line x1="10.5" y1="16" x2="3.5" y2="23" stroke="#bdbdbd" stroke-width="3.2"/><line x1="10" y1="16.5" x2="4" y2="22.5" stroke="#e4e0d8" stroke-width="1.8"/></svg>
<div class="a" style="left:61px;top:-10px;width:379px;height:23px;border:1px solid #c9c9c9;border-radius:2px;background:#f0f0f0"></div>
<div class="a" style="left:419px;top:-9px;width:1px;height:21px;background:#d6d6d6"></div>
<div class="t" style="left:64.5px;top:-3.50px;font-size:10.7px;line-height:13px;font-weight:400;color:#8d8d8d;">0</div>
<svg class="a" style="left:425px;top:-1px" width="9" height="5" viewBox="0 0 9 5"><polygon points="0,0 9,0 4.5,5" fill="#bdbdbd"/></svg>
<div class="a" style="left:446px;top:-10px;width:23px;height:23px;border:1px solid #cfcfcf;border-radius:2px;background:#efefef"></div>
<div class="a" style="left:469px;top:-10px;width:12px;height:23px;border:1px solid #cfcfcf;border-radius:2px;background:#efefef"></div>
<svg class="a" style="left:449px;top:-3px" width="19" height="15" viewBox="0 0 19 15"><polygon points="1,1.5 16.5,3 16.5,12 1,10.5" fill="#dde2e8"/><path d="M8 2L8 11.5L10.3 9.3L12.3 13L14 12.2L12.1 8.6L15.3 8.3Z" fill="#f6f6f6" stroke="#b9b9b9" stroke-width="0.9"/></svg>
<svg class="a" style="left:471px;top:-1px" width="8" height="4" viewBox="0 0 8 4"><polygon points="0,0 8,0 4.0,4" fill="#bdbdbd"/></svg>
<svg class="a" style="left:491px;top:-5px" width="24" height="17" viewBox="0 0 24 17"><polygon points="0,7.5 5.2,1.5 5.2,13.5" fill="#d6d6d6"/><rect x="5.5" y="0.5" width="12" height="15" fill="#f6f6f6" stroke="#c8c8c8"/><line x1="5.5" y1="7.5" x2="17.5" y2="7.5" stroke="#c8c8c8"/><rect x="8" y="3.3" width="7.5" height="1.8" fill="#c0c0c0"/><rect x="8" y="11" width="7" height="1" fill="#c0c0c0"/><polygon points="16.3,11 23,11 19.6,15.3" fill="#bdbdbd"/></svg>
<div class="a" style="left:11px;top:26px;width:14px;height:14px;background:#fff;border:1px solid #b3b3b3;border-radius:1px"></div>
<div class="t" style="left:29.100000000000023px;top:27.50px;font-size:10.7px;line-height:13px;font-weight:400;color:#000;">Pixel size-based visibility (labels in map units)</div>
<svg class="a" style="left:491px;top:26px" width="24" height="17" viewBox="0 0 24 17"><polygon points="0,7.5 5.2,1.5 5.2,13.5" fill="#999"/><rect x="5.5" y="0.5" width="12" height="15" fill="#fff" stroke="#777"/><line x1="5.5" y1="7.5" x2="17.5" y2="7.5" stroke="#777"/><rect x="8" y="3.3" width="7.5" height="1.8" fill="#555"/><rect x="8" y="11" width="7" height="1" fill="#555"/><polygon points="16.3,11 23,11 19.6,15.3" fill="#444"/></svg>
<div class="a" style="left:31px;top:56px;width:451px;height:20px;border:1px solid #c9c9c9;border-radius:2px;background:#f0f0f0"></div>
<div class="a" style="left:467px;top:57px;width:1px;height:18px;background:#d6d6d6"></div>
<div class="t" style="left:35.5px;top:60.50px;font-size:10.7px;line-height:13px;font-weight:400;color:#8d8d8d;">Minimum 3 px</div>
<div class="a" style="left:468px;top:57px;width:13px;height:18px;background:linear-gradient(#fafafa,#f0f0f0)"></div>
<svg class="a" style="left:470.5px;top:60.5px" width="8" height="4" viewBox="0 0 8 4"><polygon points="0,4 8,4 4.0,0" fill="#c4c4c4"/></svg>
<svg class="a" style="left:470.5px;top:68px" width="8" height="4" viewBox="0 0 8 4"><polygon points="0,0 8,0 4.0,4" fill="#bdbdbd"/></svg>
<svg class="a" style="left:491px;top:58px" width="24" height="17" viewBox="0 0 24 17"><polygon points="0,7.5 5.2,1.5 5.2,13.5" fill="#d6d6d6"/><rect x="5.5" y="0.5" width="12" height="15" fill="#f6f6f6" stroke="#c8c8c8"/><line x1="5.5" y1="7.5" x2="17.5" y2="7.5" stroke="#c8c8c8"/><rect x="8" y="3.3" width="7.5" height="1.8" fill="#c0c0c0"/><rect x="8" y="11" width="7" height="1" fill="#c0c0c0"/><polygon points="16.3,11 23,11 19.6,15.3" fill="#bdbdbd"/></svg>
<div class="a" style="left:31px;top:88px;width:451px;height:20px;border:1px solid #c9c9c9;border-radius:2px;background:#f0f0f0"></div>
<div class="a" style="left:467px;top:89px;width:1px;height:18px;background:#d6d6d6"></div>
<div class="t" style="left:35.5px;top:92.50px;font-size:10.7px;line-height:13px;font-weight:400;color:#8d8d8d;">Maximum 10000 px</div>
<div class="a" style="left:468px;top:89px;width:13px;height:18px;background:linear-gradient(#fafafa,#f0f0f0)"></div>
<svg class="a" style="left:470.5px;top:92.5px" width="8" height="4" viewBox="0 0 8 4"><polygon points="0,4 8,4 4.0,0" fill="#c4c4c4"/></svg>
<svg class="a" style="left:470.5px;top:100px" width="8" height="4" viewBox="0 0 8 4"><polygon points="0,0 8,0 4.0,4" fill="#bdbdbd"/></svg>
<svg class="a" style="left:491px;top:90px" width="24" height="17" viewBox="0 0 24 17"><polygon points="0,7.5 5.2,1.5 5.2,13.5" fill="#d6d6d6"/><rect x="5.5" y="0.5" width="12" height="15" fill="#f6f6f6" stroke="#c8c8c8"/><line x1="5.5" y1="7.5" x2="17.5" y2="7.5" stroke="#c8c8c8"/><rect x="8" y="3.3" width="7.5" height="1.8" fill="#c0c0c0"/><rect x="8" y="11" width="7" height="1" fill="#c0c0c0"/><polygon points="16.3,11 23,11 19.6,15.3" fill="#bdbdbd"/></svg>
<div class="a" style="left:11px;top:117px;width:507px;height:1px;background:#a9a9a9"></div>
<div class="t" style="left:10.5px;top:133.50px;font-size:10.7px;line-height:13px;font-weight:400;color:#000;">Label z-index</div>
<div class="a" style="left:80px;top:129px;width:402px;height:20px;border:1px solid #adadad;border-radius:2px;background:#fff"></div>
<div class="a" style="left:467px;top:130px;width:1px;height:18px;background:#a9a9a9"></div>
<div class="t" style="left:84.5px;top:133.50px;font-size:10.7px;line-height:13px;font-weight:400;color:#000;">0.00</div>
<div class="a" style="left:468px;top:130px;width:13px;height:18px;background:linear-gradient(#fbfbfb,#f1f1f1)"></div>
<svg class="a" style="left:470.5px;top:133.5px" width="8" height="4" viewBox="0 0 8 4"><polygon points="0,4 8,4 4.0,0" fill="#555"/></svg>
<svg class="a" style="left:470.5px;top:141px" width="8" height="4" viewBox="0 0 8 4"><polygon points="0,0 8,0 4.0,4" fill="#555"/></svg>
<svg class="a" style="left:491px;top:131px" width="24" height="17" viewBox="0 0 24 17"><polygon points="0,7.5 5.2,1.5 5.2,13.5" fill="#999"/><rect x="5.5" y="0.5" width="12" height="15" fill="#fff" stroke="#777"/><line x1="5.5" y1="7.5" x2="17.5" y2="7.5" stroke="#777"/><rect x="8" y="3.3" width="7.5" height="1.8" fill="#555"/><rect x="8" y="11" width="7" height="1" fill="#555"/><polygon points="16.3,11 23,11 19.6,15.3" fill="#444"/></svg>
<div class="a" style="left:11px;top:160px;width:14px;height:14px;background:#fff;border:1px solid #b3b3b3;border-radius:1px"></div>
<div class="t" style="left:29.5px;top:161.50px;font-size:10.7px;line-height:13px;font-weight:400;color:#000;">Show all labels for this layer (including colliding labels)</div>
<div class="t" style="left:10.5px;top:183.50px;font-size:10.7px;line-height:13px;font-weight:400;color:#000;">Data defined</div>
<div class="t" style="left:22px;top:209.50px;font-size:10.7px;line-height:13px;font-weight:400;color:#000;">Show label</div>
<svg class="a" style="left:83px;top:208px" width="24" height="17" viewBox="0 0 24 17"><polygon points="0,7.5 5.2,1.5 5.2,13.5" fill="#999"/><rect x="5.5" y="0.5" width="12" height="15" fill="#fff" stroke="#777"/><line x1="5.5" y1="7.5" x2="17.5" y2="7.5" stroke="#777"/><rect x="8" y="3.3" width="7.5" height="1.8" fill="#555"/><rect x="8" y="11" width="7" height="1" fill="#555"/><polygon points="16.3,11 23,11 19.6,15.3" fill="#444"/></svg>
<div class="a" style="left:116px;top:202px;width:1px;height:26px;background:#a9a9a9"></div>
<div class="t" style="left:124.80000000000001px;top:209.50px;font-size:10.7px;line-height:13px;font-weight:400;color:#000;">Always show</div>
<svg class="a" style="left:196px;top:208px" width="24" height="17" viewBox="0 0 24 17"><polygon points="0,7.5 5.2,1.5 5.2,13.5" fill="#999"/><rect x="5.5" y="0.5" width="12" height="15" fill="#fff" stroke="#777"/><line x1="5.5" y1="7.5" x2="17.5" y2="7.5" stroke="#777"/><rect x="8" y="3.3" width="7.5" height="1.8" fill="#555"/><rect x="8" y="11" width="7" height="1" fill="#555"/><polygon points="16.3,11 23,11 19.6,15.3" fill="#444"/></svg>
<div class="t" style="left:10.5px;top:234.50px;font-size:10.7px;line-height:13px;font-weight:400;color:#000;">Show upside-down labels</div>
<svg class="a" style="left:23px;top:255px" width="14" height="14" viewBox="0 0 14 14"><circle cx="7" cy="7" r="6.4" fill="#fff" stroke="#adadad" stroke-width="1"/><circle cx="7" cy="7" r="3" fill="#4a4a4a" stroke="#1c1c1c" stroke-width="1"/></svg>
<div class="t" style="left:42.39999999999998px;top:256.50px;font-size:10.7px;line-height:13px;font-weight:400;color:#000;">never</div>
<svg class="a" style="left:81.5px;top:255px" width="14" height="14" viewBox="0 0 14 14"><circle cx="7" cy="7" r="6.4" fill="#fff" stroke="#adadad" stroke-width="1"/></svg>
<div class="t" style="left:101.19999999999999px;top:256.50px;font-size:10.7px;line-height:13px;font-weight:400;color:#000;letter-spacing:0.18px">when rotation defined</div>
<svg class="a" style="left:218.60000000000002px;top:255px" width="14" height="14" viewBox="0 0 14 14"><circle cx="7" cy="7" r="6.4" fill="#fff" stroke="#adadad" stroke-width="1"/></svg>
<div class="t" style="left:238.29999999999995px;top:256.50px;font-size:10.7px;line-height:13px;font-weight:400;color:#000;">always</div>
<svg class="a" style="left:2.5px;top:296.5px" width="11.5" height="7" viewBox="0 0 11.5 7"><polygon points="0,0 11.5,0 5.75,7" fill="#333"/></svg>
<div class="t" style="left:21.399999999999977px;top:291.50px;font-size:11.9px;line-height:15px;font-weight:700;color:#000;">Feature options</div>
<div class="a" style="left:1px;top:309px;width:528px;height:174px;border:1px solid #d9d9d9;border-radius:2px;background:#ececec"></div>
<div class="a" style="left:11px;top:325px;width:14px;height:14px;background:#fff;border:1px solid #b3b3b3;border-radius:1px"></div>
<div class="t" style="left:29.30000000000001px;top:326.50px;font-size:10.7px;line-height:13px;font-weight:400;color:#000;letter-spacing:0.19px">Label every part of multi-part features</div>
<svg class="a" style="left:491px;top:325px" width="24" height="17" viewBox="0 0 24 17"><polygon points="0,7.5 5.2,1.5 5.2,13.5" fill="#999"/><rect x="5.5" y="0.5" width="12" height="15" fill="#fff" stroke="#777"/><line x1="5.5" y1="7.5" x2="17.5" y2="7.5" stroke="#777"/><rect x="8" y="3.3" width="7.5" height="1.8" fill="#555"/><rect x="8" y="11" width="7" height="1" fill="#555"/><polygon points="16.3,11 23,11 19.6,15.3" fill="#444"/></svg>
<div class="a" style="left:11px;top:354px;width:14px;height:14px;background:#fff;border:1px solid #b3b3b3;border-radius:1px"></div>
<svg class="a" style="left:11px;top:354px" width="14" height="14" viewBox="0 0 14 14"><path d="M3.5 6.8L6.3 11.6L10.8 3.2" fill="none" stroke="#000" stroke-width="1.9" stroke-linejoin="round"/></svg>
<div class="t" style="left:29.30000000000001px;top:355.50px;font-size:10.7px;line-height:13px;font-weight:400;color:#000;">Merge connected lines to avoid duplicate labels</div>
<div class="a" style="left:11px;top:378px;width:14px;height:14px;background:#fff;border:1px solid #b3b3b3;border-radius:1px"></div>
<div class="t" style="left:29.30000000000001px;top:379.50px;font-size:10.7px;line-height:13px;font-weight:400;color:#000;">Limit number of features to be labeled to</div>
<div class="a" style="left:25px;top:403px;width:493px;height:20px;border:1px solid #c9c9c9;border-radius:2px;background:#f0f0f0"></div>
<div class="a" style="left:503px;top:404px;width:1px;height:18px;background:#d6d6d6"></div>
<div class="t" style="left:30px;top:407.50px;font-size:10.7px;line-height:13px;font-weight:400;color:#8d8d8d;">2000</div>
<svg class="a" style="left:506.5px;top:407.5px" width="8" height="4" viewBox="0 0 8 4"><polygon points="0,4 8,4 4.0,0" fill="#c4c4c4"/></svg>
<svg class="a" style="left:506.5px;top:415px" width="8" height="4" viewBox="0 0 8 4"><polygon points="0,0 8,0 4.0,4" fill="#bdbdbd"/></svg>
<div class="t" style="left:10.5px;top:430.50px;font-size:10.7px;line-height:13px;font-weight:400;color:#000;">Suppress labeling of features smaller than</div>
<div class="a" style="left:25px;top:450px;width:493px;height:20px;border:1px solid #adadad;border-radius:2px;background:#fff"></div>
<div class="a" style="left:503px;top:451px;width:1px;height:18px;background:#a9a9a9"></div>
<div class="t" style="left:30px;top:454.50px;font-size:10.7px;line-height:13px;font-weight:400;color:#000;">5.00 mm</div>
<svg class="a" style="left:478px;top:454px" width="16" height="12" viewBox="0 0 16 12"><path d="M0.5 6L4.5 1.5H15V10.5H4.5Z" fill="#8a8a8a"/><path d="M7.5 3.5L11.5 8.5M11.5 3.5L7.5 8.5" stroke="#fff" stroke-width="1.3"/></svg>
<svg class="a" style="left:506.5px;top:454.5px" width="8" height="4" viewBox="0 0 8 4"><polygon points="0,4 8,4 4.0,0" fill="#555"/></svg>
<svg class="a" style="left:506.5px;top:462px" width="8" height="4" viewBox="0 0 8 4"><polygon points="0,0 8,0 4.0,4" fill="#555"/></svg>
</div>
<div class="a" style="left:809px;top:239px;width:17px;height:492px;background:linear-gradient(90deg,#fdfdfd,#f2f2f2);border-left:1px solid #b4b4b4"></div>
<div class="a" style="left:810px;top:239px;width:13px;height:14px;background:#fff;border-bottom:1px solid #c4c4c4"></div>
<svg class="a" style="left:812px;top:244px" width="9" height="5" viewBox="0 0 9 5"><polygon points="0,5 9,5 4.5,0" fill="#444"/></svg>
<div class="a" style="left:810px;top:253px;width:13px;height:81px;background:#e6e6e6;border-bottom:1px solid #c4c4c4"></div>
<div class="a" style="left:810px;top:717px;width:13px;height:14px;background:linear-gradient(#f6f6f6,#fdfdfd);border-top:1px solid #c4c4c4"></div>
<svg class="a" style="left:812px;top:722px" width="8" height="4" viewBox="0 0 8 4"><polygon points="0,0 8,0 4.0,4" fill="#444"/></svg>
<div class="a" style="left:155px;top:737px;width:80px;height:21px;border:1px solid #adadad;border-radius:3px;background:linear-gradient(#f7f7f7,#ebebeb)"></div>
<div class="t" style="left:176.6px;top:741.50px;font-size:10.7px;line-height:13px;font-weight:400;color:#000;">Style</div>
<svg class="a" style="left:223.5px;top:745px" width="6.5" height="3.5" viewBox="0 0 6.5 3.5"><polygon points="0,0 6.5,0 3.25,3.5" fill="#707070"/></svg>
<div class="a" style="left:485px;top:737px;width:80px;height:21px;border:1px solid #3d9cf6;border-radius:3px;background:linear-gradient(#fdfdfd,#e8ecf1)"></div>
<div class="t" style="left:485px;width:80px;text-align:center;top:741.50px;font-size:10.7px;line-height:13px;font-weight:400;color:#000">OK</div>
<div class="a" style="left:571px;top:737px;width:80px;height:21px;border:1px solid #adadad;border-radius:3px;background:linear-gradient(#f7f7f7,#ebebeb)"></div>
<div class="t" style="left:571px;width:80px;text-align:center;top:741.50px;font-size:10.7px;line-height:13px;font-weight:400;color:#000">Cancel</div>
<div class="a" style="left:657px;top:737px;width:80px;height:21px;border:1px solid #adadad;border-radius:3px;background:linear-gradient(#f7f7f7,#ebebeb)"></div>
<div class="t" style="left:657px;width:80px;text-align:center;top:741.50px;font-size:10.7px;line-height:13px;font-weight:400;color:#000">Apply</div>
<div class="a" style="left:743px;top:737px;width:80px;height:21px;border:1px solid #adadad;border-radius:3px;background:linear-gradient(#f7f7f7,#ebebeb)"></div>
<div class="t" style="left:743px;width:80px;text-align:center;top:741.50px;font-size:10.7px;line-height:13px;font-weight:400;color:#000">Help</div>
<div class="a" style="left:151px;top:760px;width:675px;height:1px;background:#fafafa"></div>
<div class="a" style="left:0px;top:761px;width:827px;height:1px;background:#4e4a46"></div>
</body></html>
